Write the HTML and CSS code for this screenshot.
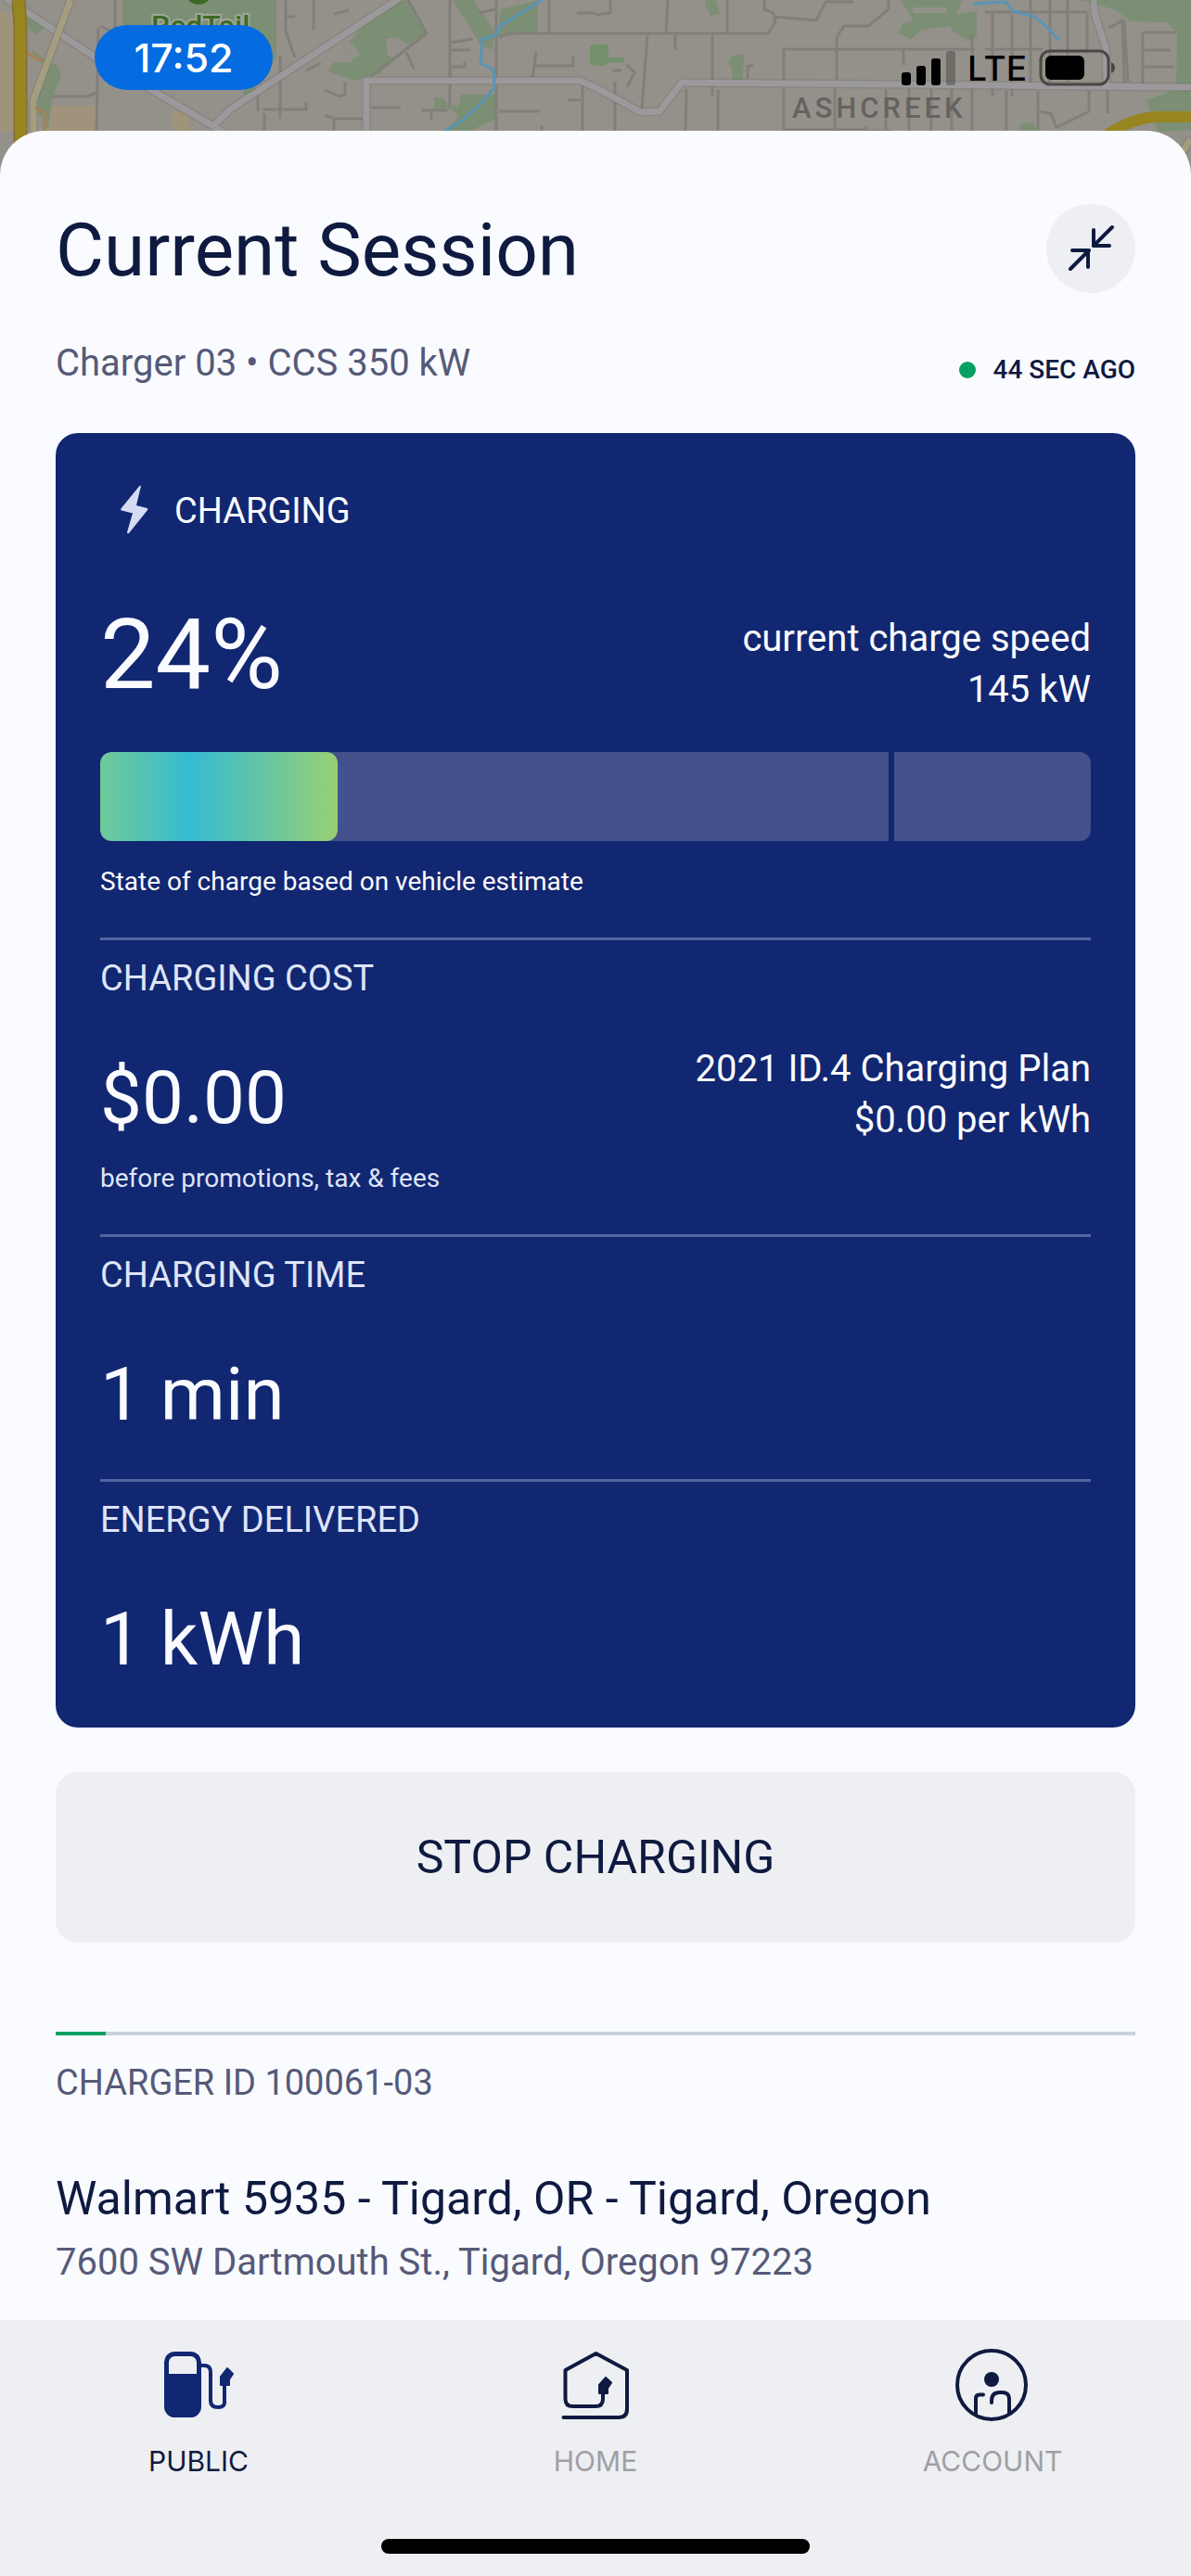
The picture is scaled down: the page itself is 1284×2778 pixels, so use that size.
FILE: index.html
```html
<!DOCTYPE html>
<html lang="en">
<head>
    <title>Current Session</title>
    <meta charset="UTF-8">
    <meta name="viewport" content="width=device-width, initial-scale=1.0">
    <link rel="stylesheet" href="styles.css">
</head>
<body>
    <!-- map behind the sheet -->
    <svg class="map" viewBox="0 0 1284 200" preserveAspectRatio="xMidYMin slice" aria-hidden="true">
        <rect width="1284" height="200" fill="#94918a"/>
        <g fill="#a0937b">
            <path d="M0 14h14v128H0zM56 114h52v28H52zM186 120h18v22h-18z"/>
        </g>
        <g fill="#7c8f74">
            <path d="M132 0h166v62l-28 40h-8V80H132z"/>
            <path d="M28 18l20 10-8 10-8-6zM30 50l18 14 14 6 4 12-10 26-4 30-12-18 6-50z"/>
            <path d="M440 0l20 36-52 44-26 7-28-10 6-10 20 0-8-14 16-22 30-28z"/>
            <path d="M488 0h22l24 34-4 20-12-6zM540 10l40-10v34l-44 6zM497 102h38v26l-30 14h-25l14-16-6-8-20-1v-12h10l4 8 12 2z"/>
            <path d="M971 0h66l-6 16 22-4v28l-10 4-15-10-4-6-30 4-12 10-13-6 4-10 12-4zM760 0h12l4 14-10 3-6-12zM790 60l12-2-1 28h-12v-12l-5-6z"/>
            <path d="M1162 0h122v140l-36 2-12-34 32-12 1-62-12-10-38-1-16-12-26-8zM1099 134l14-2 6 9h-20z"/>
            <path fill="#73916a" d="M636 50l6-2v22h-6zM642 48h14v14l17 0v5l-16 0-6 4h-9z"/>
        </g>
        <g fill="#94918a">
            <path d="M416 42l14-2 14 12-8 16-18-8zM372 50l8-4 8 14-10 4zM984 8h36v6h-36zM30 66l10 2v22l-10 0z"/>
        </g>
        <!-- side streets -->
        <g class="street">
            <path d="M124 0v36l-16-8M106 30l-2 112M56 104h38l10-4M308 0v34l10 28M338 0v32M308 18h10M302 60v68M284 118h46v-8M278 100v20M285 122v19M350 124l10 4h32M360 128v14M372 88v14l-6 2-16-7M400 116h32M454 119h28M465 119v10M485 0v115M485 54h22M485 72h16v-6M510 42l-24 4M535 0v142M578 56l-4 28M576 71h42v-10M538 40l10-4h94M516 14l18-4M622 14h20M592 36V0M626 108h-14M628 90v52M538 120h44M584 135v7M360 15l16-4M330 76l16-8M438 56l8 18M400 82l60-46-20-36"/>
            <path d="M658 0v14l-16 2M642 36h186l8-12-2-10-10-4V0M720 0l-2 36M784 0v36M698 38l-6 80M728 38v16M768 38v66M834 18l46 4 10-20h30M902 86V40l8-12h26l22-18V0M845 90V53h206M806 85V72l6-2M660 76h10M676 70l8 8-8 16M740 96l-1 46M774 96v46M663 88v54M845 96v44h88v-4M900 96v44M955 96v45M980 96v45M1004 96v45M1026 96v45M974 54v16M1048 36v105M1070 14v90M1091 16v88M1111 0v90M1132 0v90M1151 0v90M1062 13h110M1062 53h62M1172 14v40M1195 30l16-8M1210 20l2 70M1212 22l4 66M1232 35v55M1232 35h36M1232 54h30M1232 72h34M1085 98v43M1119 98v43M1194 98v24M1174 98v22l-36 18M1119 120l14 2 6 16M926 141h35"/>
        </g>
        <!-- main roads -->
        <g class="road">
            <path d="M0-6l100 66 130 76 12 8M230 136l18-18L440-8M395 142V87l230 0 18 8 48 26 20-1 24-31 549 5M1179 0l1 14 12 38 1 42"/>
        </g>
        <g class="road road-minor">
            <path d="M76 0L36 108v34M1284 150l-20 30"/>
        </g>
        <path d="M30 50l-8 4 24 12M38 116l10 6v20" fill="none" stroke="#a1835c" stroke-width="4"/>
        <path d="M20 0l2 28v170" fill="none" stroke="#8a6d33" stroke-width="15"/>
        <path d="M20 0l2 28v170M1190 148q30-22 60-22h34" fill="none" stroke="#97851f" stroke-width="12"/>
        <g fill="none" stroke="#5896b4" stroke-width="3">
            <path d="M585 0l-46 28-5 10-14 4-2 26 14 7 1 20-18 20-18 16-20 12M1050 4l34-2 8 10 24 6 14 12 12 14"/>
        </g>
        <circle cx="214" cy="-10" r="15" fill="#3b6b22"/>
        <text class="map-park" x="163" y="39">RedTail</text>
        <text class="map-area" x="854" y="127">ASHCREEK</text>
    </svg>

    <header class="status-bar">
        <span class="clock">17:52</span>
        <div class="status-right">
            <svg width="58" height="38" viewBox="0 0 58 38" role="img" aria-label="Signal">
                <rect x="0" y="24" width="10" height="14" rx="3"/>
                <rect x="16" y="17" width="10" height="21" rx="3"/>
                <rect x="32" y="9" width="10" height="29" rx="3"/>
                <rect x="48" y="1" width="10" height="37" rx="3" opacity=".25"/>
            </svg>
            <span class="network">LTE</span>
            <svg width="82" height="40" viewBox="0 0 82 40" role="img" aria-label="Battery">
                <rect x="2" y="2" width="73" height="36" rx="10" fill="none" stroke="#4a4845" stroke-width="3"/>
                <rect x="7" y="7" width="42" height="26" rx="6"/>
                <path d="M78 14q4 2 4 6t-4 6z" fill="#4a4845"/>
            </svg>
        </div>
    </header>

    <main class="sheet">
        <div class="row title-row">
            <h1 class="title">Current Session</h1>
            <button class="collapse" type="button" aria-label="Collapse">
                <svg width="96" height="96" viewBox="0 0 96 96">
                    <path d="M71 25L51 45M51 28v17h17M26 70l20-20M28 50h17v18"/>
                </svg>
            </button>
        </div>
        <div class="row sub-row">
            <p class="muted">Charger 03 • CCS 350 kW</p>
            <p class="updated"><span class="dot"></span>44 SEC AGO</p>
        </div>

        <section class="card">
            <div class="card-head">
                <svg width="72" height="72" viewBox="0 0 72 72" aria-hidden="true">
                    <path d="M42 9.500Q44 7.500 43.800 10L39 30l11.500 3q1.500.6.600 2L31 60q-2 1-2-1l6-20.500-12-3q-1.500-.8-.6-2z" fill="#d5dbf4"/>
                </svg>
                <h2 class="label">CHARGING</h2>
            </div>
            <div class="row percent-row">
                <p class="percent">24%</p>
                <p class="detail">current charge speed<br>145 kW</p>
            </div>
            <div class="charge-bar" role="progressbar" aria-label="State of charge" aria-valuenow="24" aria-valuemin="0" aria-valuemax="100">
                <div class="charge-main"></div>
                <div class="charge-top"></div>
                <div class="charge-fill" style="width: 24%"></div>
            </div>
            <p class="note bright">State of charge based on vehicle estimate</p>

            <div class="metric metric-cost">
                <h2 class="label">CHARGING COST</h2>
                <div class="row">
                    <p class="value">$0.00</p>
                    <p class="detail">2021 ID.4 Charging Plan<br>$0.00 per kWh</p>
                </div>
                <p class="note">before promotions, tax &amp; fees</p>
            </div>
            <div class="metric metric-time">
                <h2 class="label">CHARGING TIME</h2>
                <p class="value">1 min</p>
            </div>
            <div class="metric">
                <h2 class="label">ENERGY DELIVERED</h2>
                <p class="value">1 kWh</p>
            </div>
        </section>

        <button class="stop" type="button">STOP CHARGING</button>

        <div class="rule"></div>
        <p class="muted charger-id">CHARGER ID 100061-03</p>
        <h2 class="place">Walmart 5935 - Tigard, OR - Tigard, Oregon</h2>
        <p class="muted address">7600 SW Dartmouth St., Tigard, Oregon 97223</p>
    </main>

    <nav class="tab-bar">
        <div class="tabs">
            <a class="tab active" href="#public">
                <svg width="84" height="84" viewBox="0 0 84 84">
                    <rect x="7.500" y="8.500" width="35" height="66" rx="9" fill="none" stroke="#112771" stroke-width="5"/>
                    <path d="M8 30h34v36q0 8-8 8H16q-8 0-8-8z" fill="#112771"/>
                    <path d="M45 21h3q7 0 7 7v31q0 7 8 7t7-7V41" fill="none" stroke="#112771" stroke-width="4"/>
                    <path d="M73 24l6 6-4 6v6h-9v-9z" fill="#112771" stroke="#112771" stroke-width="2" stroke-linejoin="round"/>
                </svg>
                <span>PUBLIC</span>
            </a>
            <a class="tab" href="#home">
                <svg width="84" height="84" viewBox="0 0 84 84">
                    <path d="M7.500 77H67q9 0 9-9V26L42.500 8 9.500 26v31q0 8 8 8H42q8 0 8-8v-7" fill="none" stroke="#0f1a40" stroke-width="4" stroke-linecap="round" stroke-linejoin="round"/>
                    <path d="M53 34l6 5.500-4 6V51h-9V42z" fill="#0f1a40" stroke="#0f1a40" stroke-width="2" stroke-linejoin="round"/>
                </svg>
                <span>HOME</span>
            </a>
            <a class="tab" href="#account">
                <svg width="84" height="84" viewBox="0 0 84 84">
                    <g fill="none" stroke="#0f1a40" stroke-width="4" stroke-linecap="round">
                        <circle cx="41" cy="42" r="37"/>
                        <path d="M32 52.500h-4q-4 0-4 4V74M41 61v-2q0-9 9-9h2q8 0 8 7v15"/>
                    </g>
                    <circle cx="41" cy="36" r="8" fill="#0f1a40"/>
                </svg>
                <span>ACCOUNT</span>
            </a>
        </div>
        <div class="home-indicator"></div>
    </nav>
</body>
</html>
```
FILE: styles.css
```css
:root{
    --bg: #fafbff;
    --panel: #eeeff3;
    --navy: #0f1a40;
    --blue: #112771;
    --muted: #555a78;
    --green: #07a063;
    --light: #dfe4f8;
}

*{
    box-sizing: border-box;
}

body{
    margin: 0;
    min-height: 100vh;
    display: flex;
    flex-direction: column;
    position: relative;
    background-color: var(--bg);
    color: var(--navy);
    font-family: Roboto, "Liberation Sans", sans-serif;
    font-size: 40px;
    line-height: 55px;
}

h1, h2, p{
    margin: 0;
    font-weight: 400;
}

button{
    border: none;
    padding: 0;
    font-family: inherit;
    color: inherit;
    background-color: var(--panel);
}

/* map */

.map{
    position: absolute;
    top: 0;
    left: 0;
    width: 100%;
    height: 200px;
    z-index: -1;
}

.street{
    fill: none;
    stroke: #827f7a;
    stroke-width: 3;
}

.road{
    fill: none;
    stroke: #9b999b;
    stroke-width: 7;
    filter: drop-shadow(0 0 1px #6d6a68);
}

.road-minor{
    stroke: #a59d7f;
}

.map-park{
    font: 500 32px Roboto, sans-serif;
    fill: #3b6b22;
    stroke: #a3a59c;
    stroke-width: 4;
    paint-order: stroke;
}

.map-area{
    font: 500 31px Roboto, sans-serif;
    letter-spacing: 4px;
    fill: #65635f;
}

/* status bar */

.status-bar{
    display: flex;
    justify-content: space-between;
    align-items: flex-end;
    height: 141px;
    padding: 0 82px 44px 102px;
    font-family: Inter, "Liberation Sans", sans-serif;
}

.clock{
    width: 192px;
    border-radius: 35px;
    background-color: #046ce0;
    color: #fff;
    font-size: 43px;
    font-weight: 500;
    line-height: 70px;
    text-align: center;
}

.status-right{
    display: flex;
    align-items: center;
    gap: 13px;
    height: 48px;
    color: #000;
}

.network{
    font-size: 37px;
    font-weight: 500;
}

/* sheet */

.sheet{
    flex: 1;
    padding: 79px 60px 35px;
    border-radius: 48px 48px 0 0;
    background-color: var(--bg);
}

.row{
    display: flex;
    justify-content: space-between;
}

.title-row{
    align-items: flex-end;
    margin-bottom: 48px;
}

.title{
    font-size: 80px;
    line-height: 92px;
}

.collapse{
    width: 96px;
    height: 96px;
    border-radius: 50%;
}

.collapse svg{
    display: block;
    fill: none;
    stroke: var(--navy);
    stroke-width: 4;
    stroke-linecap: round;
    stroke-linejoin: round;
}

.sub-row{
    align-items: flex-end;
    margin-bottom: 48px;
}

.muted{
    color: var(--muted);
}

.updated{
    display: flex;
    align-items: center;
    gap: 18px;
    font-size: 28px;
    font-weight: 500;
    line-height: 40px;
}

.dot{
    width: 18px;
    height: 18px;
    border-radius: 50%;
    background-color: var(--green);
}

/* session card */

.card{
    padding: 48px 48px 36px;
    border-radius: 24px;
    background-color: var(--blue);
    color: var(--bg);
}

.card-head{
    display: flex;
    align-items: center;
    gap: 8px;
    margin-bottom: 64px;
}

.label, .charger-id{
    font-size: 38px;
}

.percent-row{
    height: 120px;
    margin-bottom: 40px;
}

.percent-row .detail{
    align-self: flex-end;
}

.percent{
    font-size: 106px;
    line-height: 110px;
}

.detail{
    text-align: right;
}

.charge-bar{
    position: relative;
    display: flex;
    gap: 6px;
    height: 96px;
    margin-bottom: 24px;
    border-radius: 12px;
    overflow: hidden;
}

.charge-main{
    flex: 4;
    background-color: #43518c;
}

.charge-top{
    flex: 1;
    background-color: #43518c;
}

.charge-fill{
    position: absolute;
    top: 0;
    left: 0;
    height: 100%;
    border-radius: 12px;
    background: linear-gradient(90deg, #70ca98, #35bbd3 38%, #98d073);
}

.note{
    color: var(--light);
    font-size: 28px;
    line-height: 40px;
}

.bright{
    color: var(--bg);
}

.metric{
    margin-top: 32px;
    border-top: 3px solid #53659f;
    padding-top: 14px;
}

.metric-cost, .metric-time{
    margin-top: 40px;
}

.metric .label{
    margin-bottom: 42px;
    color: var(--light);
}

.value{
    font-size: 80px;
    line-height: 118px;
}

.metric .note{
    margin-top: 8px;
}

.stop{
    display: block;
    width: 100%;
    height: 184px;
    margin: 48px 0 96px;
    border-radius: 24px;
    font-size: 50px;
}

.rule{
    height: 4px;
    margin-bottom: 24px;
    background: linear-gradient(90deg, var(--green) 54px, #c8d0d9 54px);
}

.charger-id{
    margin-bottom: 64px;
}

.place{
    margin-bottom: 8px;
    font-size: 50px;
    line-height: 66px;
}

/* tab bar */

.tab-bar{
    padding: 28px 0 24px;
    background-color: var(--panel);
    font-family: Inter, "Liberation Sans", sans-serif;
}

.tabs{
    display: grid;
    grid-template-columns: repeat(3, 1fr);
    margin-bottom: 64px;
}

.tab{
    display: flex;
    flex-direction: column;
    align-items: center;
    gap: 20px;
    color: #9fa0a3;
    font-size: 30px;
    line-height: 40px;
    text-decoration: none;
}

.active{
    color: var(--navy);
}

.home-indicator{
    width: 36%;
    height: 16px;
    margin: 0 auto;
    border-radius: 8px;
    background-color: #000;
}
```
